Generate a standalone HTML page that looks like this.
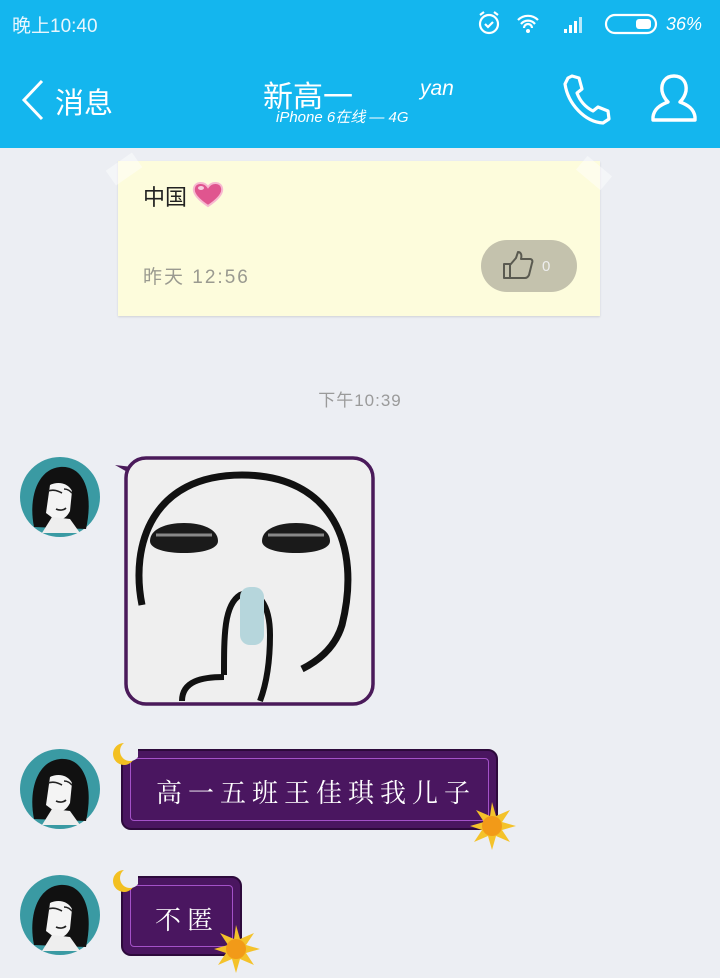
<!DOCTYPE html>
<html><head><meta charset="utf-8">
<style>
*{margin:0;padding:0;box-sizing:border-box}
body{width:720px;height:978px;overflow:hidden;background:#eceef3;font-family:"Liberation Sans","Noto Sans CJK SC",sans-serif;position:relative}
.abs{position:absolute}
#top{left:0;top:0;width:720px;height:148px;background:#14b6ee}
.w{color:#fff}
.note{left:118px;top:161px;width:482px;height:155px;background:#fdfcdc;box-shadow:0 1px 2px rgba(0,0,0,.12)}
.like{left:481px;top:240px;width:96px;height:52px;border-radius:26px;background:#c4c2ad}
.bub{background:#4a1660;border-radius:10px;border:2px solid #2d0a3b}
.bub .in{position:absolute;left:7px;top:7px;right:7px;bottom:7px;border:1.5px solid #a452c8;border-radius:4px}
.bub .t{position:absolute;color:#fff;font-size:26px;letter-spacing:6px;font-family:"Liberation Serif","Noto Serif CJK SC",serif}
</style></head><body>
<div id="top" class="abs"></div>
<div class="abs w" style="left:12px;top:11px;font-size:19px;color:#e8f6fd">晚上10:40</div>
<svg class="abs" style="left:476px;top:10px" width="240" height="28" viewBox="0 0 240 28">
 <g fill="none" stroke="#fff" stroke-width="2.2">
  <circle cx="13" cy="14" r="9"/><path d="M9 14l3 3 5-5"/><path d="M4 5l4-3M22 5l-4-3"/>
  <path d="M42 10a14 14 0 0 1 20 0M45 14a9 9 0 0 1 14 0M48 18a4 4 0 0 1 8 0"/>
  <rect x="130" y="5" width="50" height="18" rx="9"/>
 </g>
 <circle cx="52" cy="21" r="2" fill="#fff"/>
 <g fill="#fff"><rect x="88" y="19" width="3" height="4"/><rect x="93" y="15" width="3" height="8"/><rect x="98" y="11" width="3" height="12"/><rect x="103" y="7" width="3" height="16" opacity=".7"/><rect x="160" y="9" width="15" height="10" rx="3"/></g>
 <text x="190" y="20" fill="#fff" font-size="18" font-style="italic" font-family="Liberation Sans">36%</text>
</svg>
<svg class="abs" style="left:18px;top:78px" width="30" height="44"><path d="M24 3L6 22l18 19" fill="none" stroke="#fff" stroke-width="3"/></svg>
<div class="abs w" style="left:55px;top:80px;font-size:29px">消息</div>
<div class="abs w" style="left:263px;top:72px;font-size:30px">新高一</div>
<div class="abs w" style="left:420px;top:77px;font-size:21px;font-style:italic">yan</div>
<div class="abs w" style="left:276px;top:106px;font-size:15px;font-style:italic">iPhone 6在线 — 4G</div>
<svg class="abs" style="left:560px;top:72px" width="56" height="54" viewBox="0 0 56 54"><path d="M12 4l7 2 3 11-5 4c3 8 8 14 16 18l5-4 10 4 1 8-6 4C25 50 8 32 5 12l3-6z" fill="none" stroke="#fff" stroke-width="3.2" stroke-linejoin="round"/></svg>
<svg class="abs" style="left:648px;top:72px" width="52" height="52" viewBox="0 0 52 52"><path d="M26 4c-9 0-13 7-12 15 1 5 4 9 6 11-8 3-14 7-15 15v3h42v-3c-1-8-7-12-15-15 2-2 5-6 6-11 1-8-3-15-12-15z" fill="none" stroke="#fff" stroke-width="3.4" stroke-linejoin="round"/></svg>

<div class="abs note"></div>
<div class="abs" style="left:108px;top:160px;width:32px;height:18px;background:rgba(255,255,255,.45);transform:rotate(-35deg)"></div>
<div class="abs" style="left:578px;top:164px;width:32px;height:18px;background:rgba(255,255,255,.45);transform:rotate(40deg)"></div>
<div class="abs" style="left:143px;top:180px;font-size:22px;color:#222">中国</div>
<svg class="abs" style="left:192px;top:180px" width="32" height="28" viewBox="0 0 32 28"><path d="M16 26C4 18 1 12 2 8 3 2 12 1 16 7c4-6 13-5 14 1 1 4-2 10-14 18z" fill="#e0558f" stroke="#f7b8d0" stroke-width="2"/><ellipse cx="9" cy="8" rx="3" ry="2" fill="#fff" opacity=".7"/></svg>
<div class="abs" style="left:143px;top:262px;font-size:19px;color:#9a9a90;letter-spacing:2px">昨天 12:56</div>
<div class="abs like"></div>
<svg class="abs" style="left:502px;top:251px" width="32" height="30" viewBox="0 0 32 30"><path d="M2 13h6v14H2zM8 14l6-7 2-6c3 0 4 3 3 7h9c2 0 3 2 2 4l-3 12c-1 2-2 3-4 3H8" fill="none" stroke="#5a5a50" stroke-width="2" stroke-linejoin="round"/></svg>
<div class="abs" style="left:542px;top:258px;font-size:15px;color:#eee">0</div>

<div class="abs" style="left:0;top:386px;width:720px;text-align:center;font-size:17px;color:#9a9a9a;letter-spacing:1px">下午10:39</div>

<svg width="0" height="0" style="position:absolute"><defs>
<g id="av"><circle cx="40" cy="40" r="40" fill="#3a9aa3"/><path d="M14 70C8 40 18 12 40 10c24-2 34 26 26 62z" fill="#111"/><path d="M30 28c8-4 18-2 22 6l-2 20c-4 8-10 10-16 8L26 56z" fill="#f4f4f4"/><path d="M28 34c6-2 10 0 14 2M44 32c4 0 6 2 8 4M36 52c4 2 8 1 10-1" stroke="#222" stroke-width="1.6" fill="none"/><path d="M22 76l10-16 18 2 10 14z" fill="#eee"/></g>
</defs></svg>
<svg class="abs" style="left:20px;top:457px" width="80" height="80"><use href="#av"/></svg>
<svg class="abs" style="left:20px;top:749px" width="80" height="80"><use href="#av"/></svg>
<svg class="abs" style="left:20px;top:875px" width="80" height="80"><use href="#av"/></svg>

<svg class="abs" style="left:112px;top:455px" width="265" height="252" viewBox="0 0 265 252">
 <path d="M3 10l18 2 3 10z" fill="#4a1a5a"/>
 <rect x="14" y="3" width="247" height="246" rx="20" fill="#efefef" stroke="#4a1a5a" stroke-width="3.5"/>
 <path d="M30 150C18 90 40 20 130 20s120 70 100 150c-6 20-20 34-40 44" fill="none" stroke="#111" stroke-width="7"/>
 <path d="M38 86c0-12 16-18 34-18s34 6 34 18c0 8-16 12-34 12S38 94 38 86z" fill="#1a1a1a"/><path d="M44 80h56" stroke="#888" stroke-width="3"/>
 <path d="M150 86c0-12 16-18 34-18s34 6 34 18c0 8-16 12-34 12s-34-4-34-12z" fill="#1a1a1a"/><path d="M156 80h56" stroke="#888" stroke-width="3"/>
 <path d="M112 220c0-40 0-70 16-80 18-8 30 10 30 40 0 30-4 50-10 66" fill="none" stroke="#111" stroke-width="6"/>
 <rect x="128" y="132" width="24" height="58" rx="10" fill="#b6d6dc"/>
 <path d="M70 246c0-20 20-24 42-24" fill="none" stroke="#111" stroke-width="6"/>
</svg>

<div class="abs bub" style="left:121px;top:749px;width:377px;height:81px"><div class="in"></div><div class="t" style="left:33px;top:22px">高一五班王佳琪我儿子</div></div>
<div class="abs bub" style="left:121px;top:876px;width:121px;height:80px"><div class="in"></div><div class="t" style="left:32px;top:22px">不匿</div></div>

<svg width="0" height="0" style="position:absolute"><defs>
<g id="moon"><circle cx="12" cy="12" r="11" fill="#f3c021"/><circle cx="18" cy="9" r="10" fill="#eceef3"/></g>
<g id="sun"><path d="M22 0l4 14 14-6-8 12 14 4-14 4 8 12-14-6-4 14-4-14-14 6 8-12L0 24l14-4-8-12 14 6z" fill="#f4c22a"/><circle cx="22" cy="24" r="10" fill="#f29a18"/></g>
</defs></svg>
<svg class="abs" style="left:112px;top:742px" width="26" height="26"><use href="#moon"/></svg>
<svg class="abs" style="left:112px;top:869px" width="26" height="26"><use href="#moon"/></svg>
<svg class="abs" style="left:470px;top:802px" width="46" height="48"><use href="#sun"/></svg>
<svg class="abs" style="left:214px;top:925px" width="46" height="48"><use href="#sun"/></svg>
</body></html>
